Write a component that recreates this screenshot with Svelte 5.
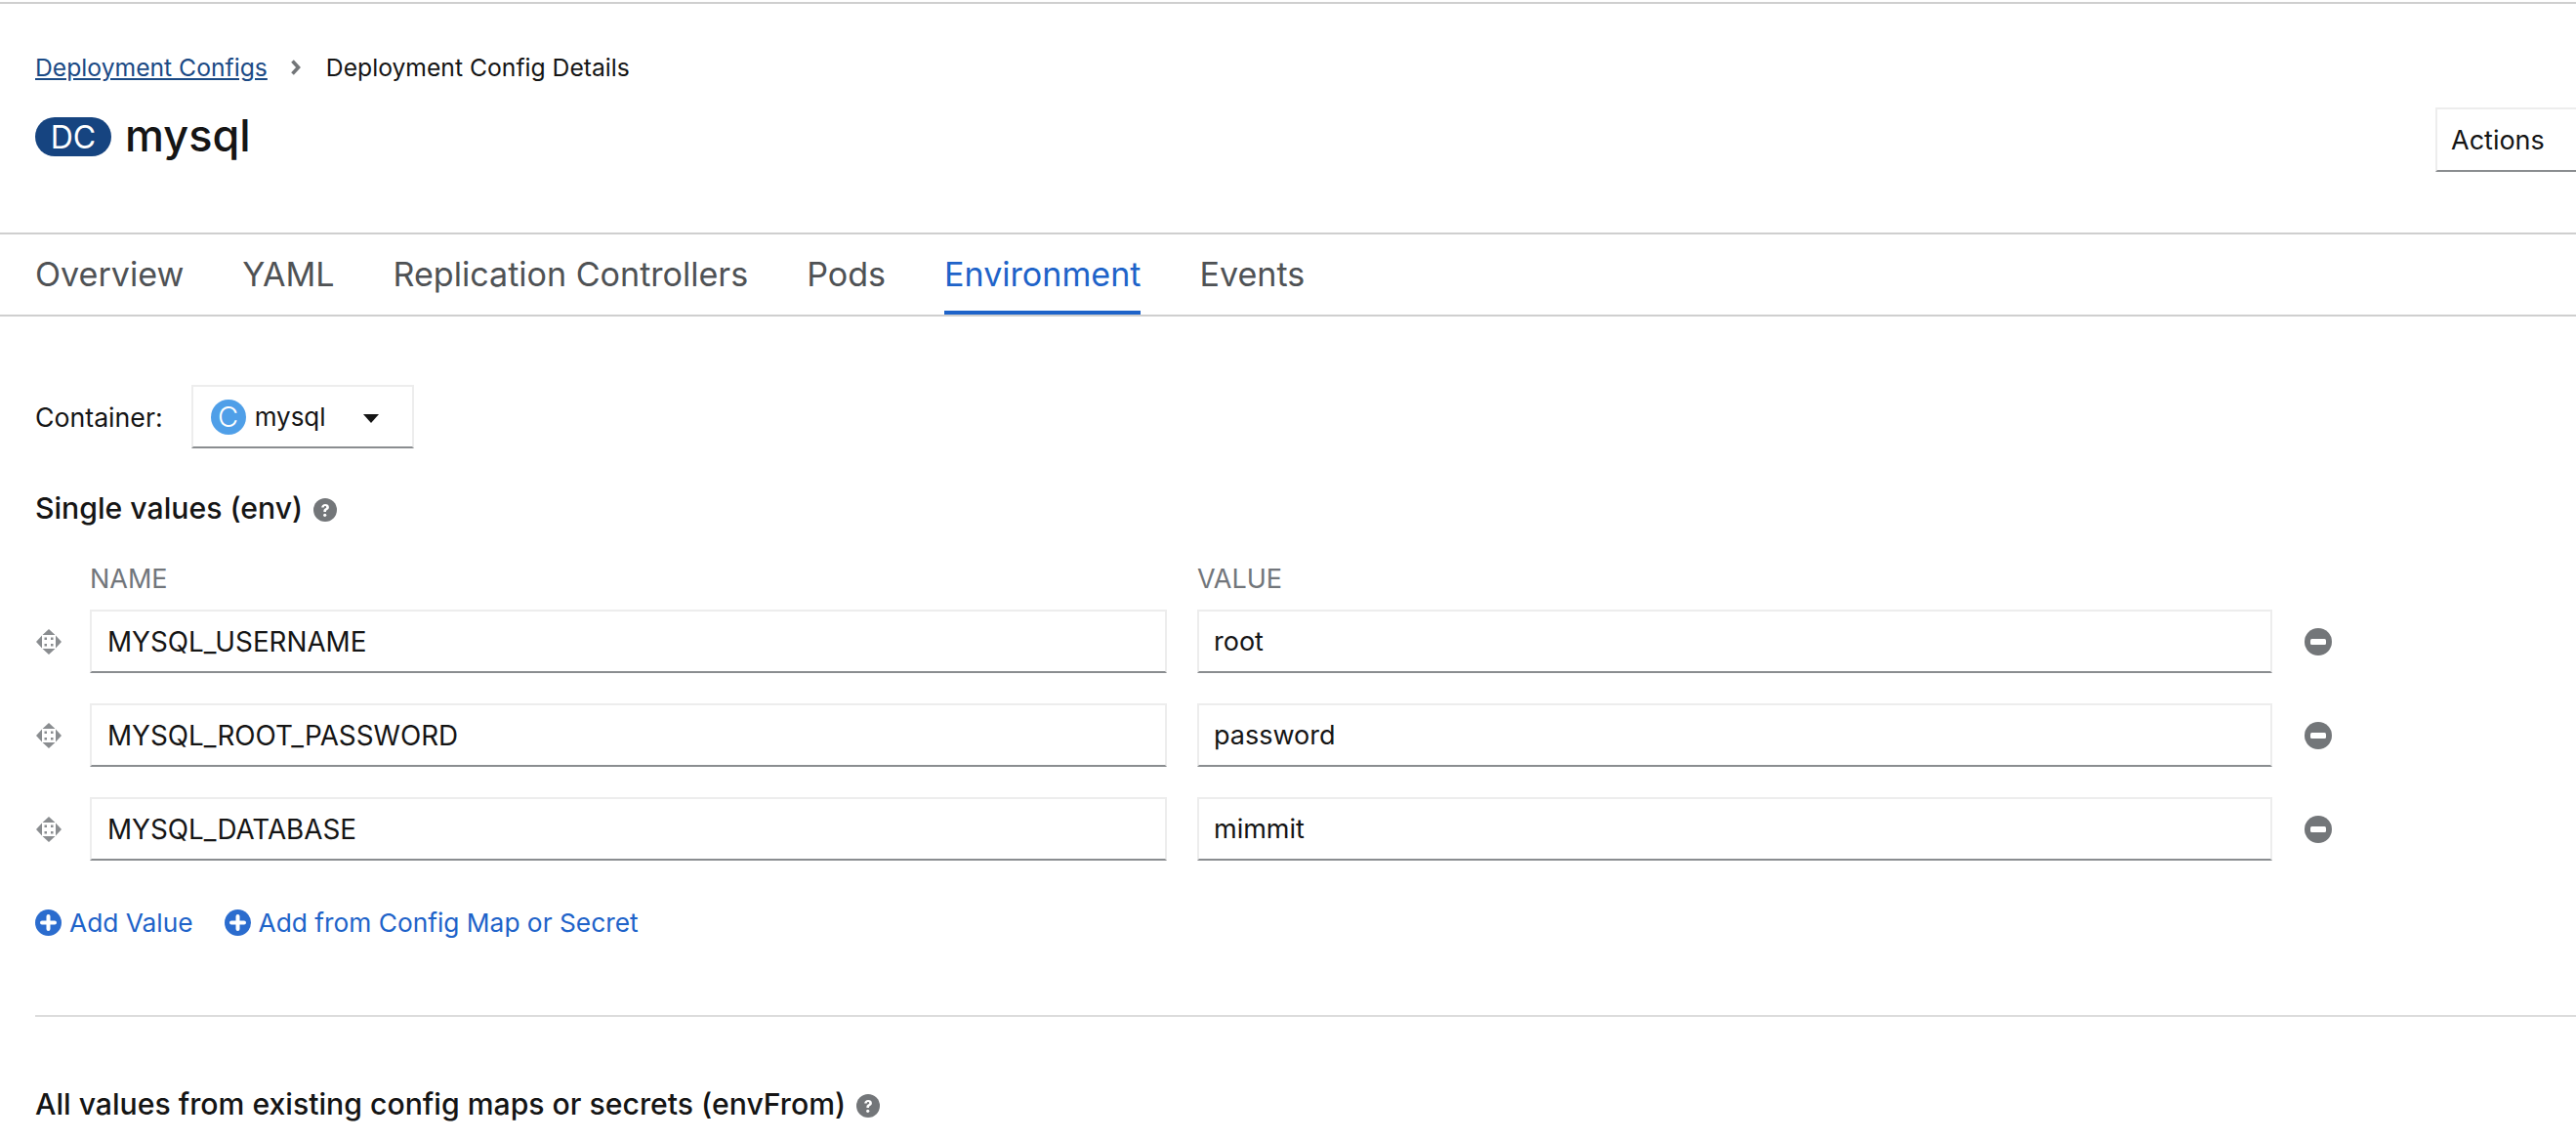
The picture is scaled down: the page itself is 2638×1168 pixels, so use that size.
<script>
  const tabs = ['Overview', 'YAML', 'Replication Controllers', 'Pods', 'Environment', 'Events'];
  const envs = [
    { name: 'MYSQL_USERNAME', value: 'root' },
    { name: 'MYSQL_ROOT_PASSWORD', value: 'password' },
    { name: 'MYSQL_DATABASE', value: 'mimmit' },
  ];
</script>

{#snippet help()}
  <svg class="help" viewBox="0 0 24 24">
    <circle cx="12" cy="12" r="12" fill="#737679" />
    <path d="M8.2 9.6c.1-2.300 1.700-3.500 3.900-3.500 2.200 0 3.800 1.200 3.800 3.100 0 1.500-.9 2.200-1.800 2.800-.8.500-1.100.8-1.100 1.600v.4h-2.600v-.7c0-1.400.6-2.100 1.500-2.700.8-.5 1.300-.8 1.300-1.400 0-.7-.5-1.100-1.200-1.100-.8 0-1.200.5-1.300 1.500z" fill="#fff" />
    <circle cx="11.700" cy="17.300" r="1.600" fill="#fff" />
  </svg>
{/snippet}

{#snippet plus()}
  <svg class="plus" viewBox="0 0 27 27">
    <circle cx="13.500" cy="13.500" r="13.500" fill="#2b6cce" />
    <path d="M13.500 7v13M7 13.500h13" stroke="#fff" stroke-width="4" stroke-linecap="round" />
  </svg>
{/snippet}

<div class="page">
  <header class="head">
    <nav class="crumbs">
      <a href="#top">Deployment Configs</a>
      <svg class="chevron" viewBox="0 0 12 18"><path d="M2.500 2.500 8.500 9l-6 6.500" fill="none" stroke="#737679" stroke-width="3.600" /></svg>
      <span>Deployment Config Details</span>
    </nav>
    <div class="title-row">
      <h1><span class="badge">DC</span><span class="name">mysql</span></h1>
      <button class="actions">Actions</button>
    </div>
  </header>

  <ul class="tabs">
    {#each tabs as tab}
      <li class:active={tab === 'Environment'}>{tab}</li>
    {/each}
  </ul>

  <main class="body">
    <div class="container-row">
      <span>Container:</span>
      <button class="select">
        <span class="c-icon">C</span>
        <span class="select-name">mysql</span>
        <svg class="caret" viewBox="0 0 16 9"><path d="M0 0h16L8 9z" fill="#151515" /></svg>
      </button>
    </div>

    <h3 class="section-title">Single values (env) {@render help()}</h3>

    <div class="labels">
      <span>NAME</span>
      <span>VALUE</span>
    </div>

    {#each envs as env}
      <div class="env-row">
        <svg class="drag" viewBox="0 0 26 26">
          <g fill="#8a8d90">
            <path d="M13 0l6.500 6H6.500zM13 26l-6.500-6h13zM0 13l6-6.500v13zM26 13l-6 6.500v-13z" />
            <rect x="8.500" y="8.500" width="2.500" height="2.500" />
            <rect x="15" y="8.500" width="2.500" height="2.500" />
            <rect x="8.500" y="15" width="2.500" height="2.500" />
            <rect x="15" y="15" width="2.500" height="2.500" />
          </g>
        </svg>
        <input class="field" value={env.name} />
        <input class="field" value={env.value} />
        <svg class="minus" viewBox="0 0 28 28">
          <circle cx="14" cy="14" r="14" fill="#737679" />
          <rect x="6" y="11" width="16" height="6" rx="1.500" fill="#fff" />
        </svg>
      </div>
    {/each}

    <div class="add-row">
      <a href="#top">{@render plus()}Add Value</a>
      <a href="#top">{@render plus()}Add from Config Map or Secret</a>
    </div>

    <hr />

    <h3 class="section-title">All values from existing config maps or secrets (envFrom) {@render help()}</h3>
  </main>
</div>

<style>
  :global(body) {
    background: #fff;
    overflow: hidden;
  }

  .page {
    height: 1168px;
    overflow: hidden;
    border-top: 2px solid transparent;
    font-family: Inter, "Liberation Sans", sans-serif;
    font-size: 27px;
    color: #151515;
  }

  .head {
    box-sizing: border-box;
    border-top: 2px solid #cfcfcf;
    border-bottom: 2px solid #cfcfcf;
    height: 238px;
    padding: 47px 0 0 36px;
  }

  .crumbs {
    display: flex;
    align-items: center;
    height: 36px;
    font-size: 24.700px;
  }

  .crumbs a {
    color: #1b4a85;
  }

  .chevron {
    width: 12px;
    height: 18px;
    margin: 0 25px 0 23px;
  }

  .title-row {
    display: flex;
    justify-content: space-between;
    margin-top: 33px;
  }

  h1 {
    display: flex;
    align-items: center;
    gap: 14px;
    margin: 0;
    font-size: 45px;
    font-weight: 500;
    height: 40px;
  }

  .name {
    padding-bottom: 3px;
  }

  .badge {
    display: inline-flex;
    align-items: center;
    justify-content: center;
    width: 78px;
    height: 40px;
    border-radius: 20px;
    background: #164480;
    color: #fff;
    font-size: 32px;
    font-weight: 400;
  }

  .actions {
    width: 200px;
    height: 66px;
    margin: -10px -56px 0 0;
    padding: 0 0 0 14px;
    text-align: left;
    background: #fff;
    border: 2px solid #ededed;
    border-bottom-color: #8a8d90;
    font: inherit;
    color: #151515;
  }

  .tabs {
    display: flex;
    gap: 60px;
    list-style: none;
    margin: 0;
    padding: 0 0 0 36px;
    height: 82px;
    border-bottom: 2px solid #cfcfcf;
    font-size: 34.100px;
    color: #4f5255;
  }

  .tabs li {
    display: flex;
    align-items: center;
    height: 82px;
    box-sizing: border-box;
    padding-bottom: 2px;
  }

  .tabs li.active {
    color: #1e63c9;
    border-bottom: 4px solid #1e63c9;
    padding: 2px 0 0;
  }

  .body {
    padding: 70px 0 0 36px;
  }

  .container-row {
    display: flex;
    align-items: center;
    gap: 29px;
    font-size: 26.700px;
  }

  .select {
    display: flex;
    align-items: center;
    width: 228px;
    height: 65px;
    padding: 0 0 0 18px;
    background: #fff;
    border: 2px solid #ededed;
    border-bottom-color: #8a8d90;
    font: inherit;
    color: #151515;
  }

  .c-icon {
    display: flex;
    align-items: center;
    justify-content: center;
    width: 36px;
    height: 36px;
    border-radius: 50%;
    background: #4f9fe8;
    color: #fff;
    font-size: 29px;
    font-weight: 300;
  }

  .select-name {
    margin-left: 9px;
    font-size: 26px;
  }

  .caret {
    width: 16px;
    height: 9px;
    margin-left: 38px;
    margin-top: 4px;
  }

  .section-title {
    display: flex;
    align-items: center;
    gap: 11px;
    margin: 43px 0 0;
    height: 36px;
    font-size: 30.200px;
    font-weight: 500;
  }

  .help {
    width: 24px;
    height: 24px;
    margin-top: 4px;
  }

  .labels {
    display: grid;
    grid-template-columns: 1103px 1101px;
    gap: 31px;
    margin: 39px 0 0 56px;
    height: 32px;
    line-height: 32px;
    color: #72767b;
  }

  .env-row {
    display: flex;
    align-items: center;
    margin-top: 31px;
    height: 65px;
  }

  .labels + .env-row {
    margin-top: 15px;
  }

  .drag {
    width: 26px;
    height: 26px;
    margin-left: 1px;
    margin-right: 29px;
  }

  .field {
    width: 1103px;
    height: 65px;
    box-sizing: border-box;
    padding: 0 16px;
    margin-right: 31px;
    border: 2px solid #ededed;
    border-bottom-color: #8a8d90;
    font: inherit;
    font-size: 27.800px;
    color: #151515;
  }

  .env-row .field:nth-of-type(2) {
    width: 1101px;
    margin-right: 33px;
    padding-left: 15px;
    font-size: 27px;
  }

  .minus {
    width: 28px;
    height: 28px;
  }

  .add-row {
    display: flex;
    gap: 32px;
    margin-top: 45px;
    height: 36px;
    font-size: 26.300px;
  }

  .add-row a {
    display: flex;
    align-items: center;
    gap: 8px;
    color: #1e63c9;
    text-decoration: none;
  }

  .plus {
    width: 27px;
    height: 27px;
  }

  hr {
    margin: 77px 0 0;
    border: 0;
    border-top: 2px solid #dcdcdc;
  }

  hr + .section-title {
    margin-top: 71px;
  }
</style>
